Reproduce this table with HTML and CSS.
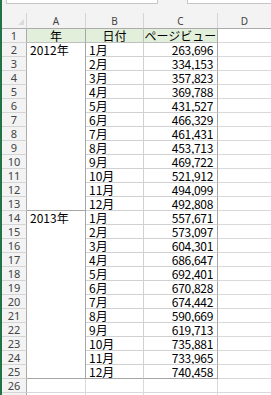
FILE: index.html
```html
<!DOCTYPE html>
<html lang="ja">
<head>
<meta charset="utf-8">
<title>Sheet</title>
<link rel="stylesheet" href="styles.css">
</head>
<body>
<div class="app">
  <div class="edge"></div>
  <div class="main">
    <div class="toolbar">
      <div class="fbox namebox"></div>
      <div class="fbox formula"></div>
    </div>
    <div class="sheet">
      <div class="corner"><span class="tri"></span></div>
      <div class="ch">A</div><div class="ch">B</div><div class="ch">C</div><div class="ch chd">D</div>

      <div class="rh">1</div><div class="c hd ha">年</div><div class="c hd hb">日付</div><div class="c hd hc">ページビュー</div><div class="c d"></div>

      <div class="rh">2</div><div class="c yr">2012年</div><div class="c m">1月</div><div class="c n">263,696</div><div class="c d"></div>
      <div class="rh">3</div><div class="c m">2月</div><div class="c n">334,153</div><div class="c d"></div>
      <div class="rh">4</div><div class="c m">3月</div><div class="c n">357,823</div><div class="c d"></div>
      <div class="rh">5</div><div class="c m">4月</div><div class="c n">369,788</div><div class="c d"></div>
      <div class="rh">6</div><div class="c m">5月</div><div class="c n">431,527</div><div class="c d"></div>
      <div class="rh">7</div><div class="c m">6月</div><div class="c n">466,329</div><div class="c d"></div>
      <div class="rh">8</div><div class="c m">7月</div><div class="c n">461,431</div><div class="c d"></div>
      <div class="rh">9</div><div class="c m">8月</div><div class="c n">453,713</div><div class="c d"></div>
      <div class="rh">10</div><div class="c m">9月</div><div class="c n">469,722</div><div class="c d"></div>
      <div class="rh">11</div><div class="c m">10月</div><div class="c n">521,912</div><div class="c d"></div>
      <div class="rh">12</div><div class="c m">11月</div><div class="c n">494,099</div><div class="c d"></div>
      <div class="rh">13</div><div class="c m">12月</div><div class="c n">492,808</div><div class="c d"></div>

      <div class="rh">14</div><div class="c yr">2013年</div><div class="c m">1月</div><div class="c n">557,671</div><div class="c d"></div>
      <div class="rh">15</div><div class="c m">2月</div><div class="c n">573,097</div><div class="c d"></div>
      <div class="rh">16</div><div class="c m">3月</div><div class="c n">604,301</div><div class="c d"></div>
      <div class="rh">17</div><div class="c m">4月</div><div class="c n">686,647</div><div class="c d"></div>
      <div class="rh">18</div><div class="c m">5月</div><div class="c n">692,401</div><div class="c d"></div>
      <div class="rh">19</div><div class="c m">6月</div><div class="c n">670,828</div><div class="c d"></div>
      <div class="rh">20</div><div class="c m">7月</div><div class="c n">674,442</div><div class="c d"></div>
      <div class="rh">21</div><div class="c m">8月</div><div class="c n">590,669</div><div class="c d"></div>
      <div class="rh">22</div><div class="c m">9月</div><div class="c n">619,713</div><div class="c d"></div>
      <div class="rh">23</div><div class="c m">10月</div><div class="c n">735,881</div><div class="c d"></div>
      <div class="rh">24</div><div class="c m">11月</div><div class="c n">733,965</div><div class="c d"></div>
      <div class="rh">25</div><div class="c m last">12月</div><div class="c n last">740,458</div><div class="c d"></div>

      <div class="rh">26</div><div class="c e"></div><div class="c e"></div><div class="c e"></div><div class="c d"></div>
      <div class="rh">27</div><div class="c e"></div><div class="c e"></div><div class="c e"></div><div class="c d"></div>
    </div>
  </div>
</div>
</body>
</html>
```

FILE: styles.css
```css
* { box-sizing: border-box; }
html, body { margin: 0; padding: 0; background: #ffffff; }
body { width: 271px; height: 395px; overflow: hidden; }

.app {
  display: flex;
  width: 271px;
  height: 395px;
  overflow: hidden;
}
.edge {
  flex: 0 0 2px;
  background: #217346;
}
.main {
  flex: 1 1 auto;
  display: flex;
  flex-direction: column;
  min-width: 0;
}

.toolbar {
  flex: 0 0 13px;
  background: #f3f3f3;
  display: flex;
  align-items: flex-start;
  padding-left: 4px;
}
.fbox {
  height: 4px;
  background: #ffffff;
  border: 1px solid #c6c6c6;
  border-top: none;
}
.namebox { width: 152px; }
.formula { flex: 1 1 auto; margin-left: 29px; border-right: none; }

.sheet {
  display: grid;
  grid-template-columns: 25px 59px 58px 74px 1fr;
  grid-template-rows: 16px;
  grid-auto-rows: 14px;
  font-family: "Noto Sans CJK JP", "Noto Sans", sans-serif;
  font-size: 12px;
  color: #000;
}

.corner {
  position: relative;
  background: #f3f3f3;
  border-right: 1px solid #d4d4d4;
  border-bottom: 1px solid #ababab;
}
.tri {
  position: absolute;
  right: 2px;
  bottom: 3px;
  width: 0;
  height: 0;
  border-left: 6px solid transparent;
  border-bottom: 6px solid #dadada;
}
.ch {
  background: #f3f3f3;
  border-right: 1px solid #d4d4d4;
  border-bottom: 1px solid #ababab;
  font-family: "Noto Sans", "Open Sans", sans-serif;
  font-size: 10px;
  line-height: 14px;
  color: #444;
  text-align: center;
  padding-top: 1px;
}
.chd { border-right: none; }

.rh {
  grid-column: 1;
  background: #f3f3f3;
  border-right: 1px solid #ababab;
  border-bottom: 1px solid #d4d4d4;
  font-family: "Noto Sans", "Open Sans", sans-serif;
  font-size: 11px;
  line-height: 13px;
  color: #444;
  text-align: center;
}

.c {
  border-right: 1px solid #d9d9d9;
  border-bottom: 1px solid #d9d9d9;
  line-height: 13px;
  white-space: nowrap;
  overflow: hidden;
  padding: 0 3px;
}

.hd {
  background: #e2efda;
  border-right-color: #bfbfbf;
  border-bottom-color: #bfbfbf;
  text-align: center;
}
.ha { grid-column: 2; border-right-color: #a6a6a6; }
.hb { grid-column: 3; }
.hc { grid-column: 4; padding: 0; border-right-color: #a6a6a6; }

.yr {
  grid-column: 2;
  grid-row: span 12;
  border-right-color: #a6a6a6;
  border-bottom-color: #a6a6a6;
}
.m { grid-column: 3; border-right-color: #d0d0d0; border-bottom-color: #d0d0d0; }
.n {
  grid-column: 4;
  text-align: right;
  padding-right: 4px;
  letter-spacing: -0.3px;
  border-right-color: #a6a6a6;
  border-bottom-color: #d0d0d0;
}
.last { border-bottom-color: #a6a6a6; }
.d { grid-column: 5; border-right: none; }
```
